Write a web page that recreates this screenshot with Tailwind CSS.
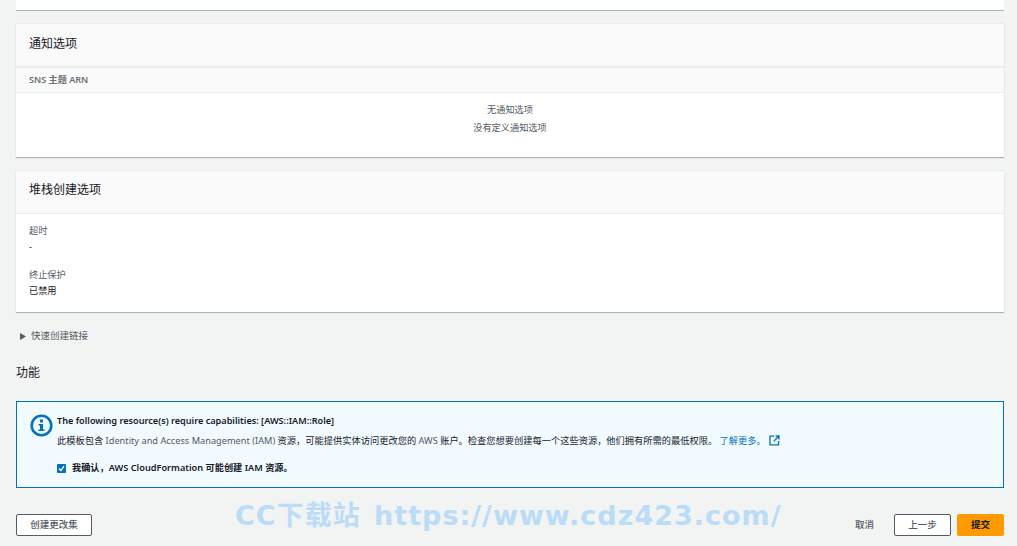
<!DOCTYPE html>
<html lang="zh-CN">
<head>
  <meta charset="UTF-8" />
  <title>快速创建堆栈</title>
  <script src="https://cdn.jsdelivr.net/npm/@tailwindcss/browser@4"></script>
</head>
<body class="relative h-[546px] w-[1017px] overflow-hidden bg-[#f2f3f3] font-['Noto_Sans','Noto_Sans_CJK_SC',sans-serif] text-[#16191f]">

<main class="flex h-[546px] flex-col pl-[16px] pr-[13px]">
  <!-- previous card, cut off by the top of the window -->
  <div class="h-[11px] shrink-0 border-b border-[#aab7b8] bg-white"></div>

  <!-- Notifications -->
  <section class="mt-[13px] h-[134px] shrink-0 border-b border-[#aab7b8] bg-white shadow-[0_0_1px_rgba(0,0,0,0.2)]">
    <div class="flex h-[44px] items-center border-b-2 border-[#eaeded] bg-[#fafafa] pb-[3px] pl-[13px] text-[12px] leading-none">通知选项</div>
    <div class="flex h-[25px] items-center border-b border-[#eaeded] bg-[#fafafa] pb-[1px] pl-[13px] text-[9.1px] font-semibold text-[#687078]">SNS 主题 ARN</div>
    <div class="flex flex-col items-center pt-[8px] text-[9.2px] leading-[18px] text-[#545b64]">
      <p>无通知选项</p>
      <p>没有定义通知选项</p>
    </div>
  </section>

  <!-- Stack creation options -->
  <section class="mt-[13px] h-[142px] shrink-0 border-b border-[#aab7b8] bg-white shadow-[0_0_1px_rgba(0,0,0,0.2)]">
    <div class="flex h-[43px] items-center border-b border-[#eaeded] bg-[#fafafa] pb-[5px] pl-[13px] text-[12px] leading-none">堆栈创建选项</div>
    <div class="pl-[13px] pt-[9px] text-[9.2px] leading-[16px]">
      <p class="text-[#545b64]">超时</p>
      <p>-</p>
      <p class="mt-[12px] text-[#545b64]">终止保护</p>
      <p>已禁用</p>
    </div>
  </section>

  <!-- Quick create link -->
  <div class="mt-[17px] flex h-[12px] shrink-0 items-center gap-[5px] pl-[4px] text-[9.5px] text-[#545b64]">
    <svg class="h-[7px] w-[6px]" viewBox="0 0 6 7"><path d="M0 0l6 3.5L0 7z" fill="#545b64"/></svg>
    <span>快速创建链接</span>
  </div>

  <h2 class="mt-[24px] h-[14px] shrink-0 text-[12px] leading-[14px] text-[#16191f]">功能</h2>

  <!-- Capabilities alert -->
  <div class="mt-[21px] flex h-[87px] shrink-0 border border-[#0073bb] bg-[#f1faff] pl-[13px] pt-[12px]">
    <svg class="h-[23px] w-[23px] shrink-0" viewBox="0 0 23 23">
      <circle cx="11.5" cy="11.5" r="9.8" fill="none" stroke="#0073bb" stroke-width="2.6"/>
      <rect x="10" y="5.5" width="3" height="3" fill="#0073bb"/>
      <path d="M8.5 10h4.5v5.5h1.5V17h-6v-1.5H10V11.5H8.5z" fill="#0073bb"/>
    </svg>
    <div class="ml-[4px] min-w-0">
      <p class="text-[9.15px] font-semibold leading-[14px]">The following resource(s) require capabilities: [AWS::IAM::Role]</p>
      <p class="mt-[6px] whitespace-nowrap text-[9.24px] leading-[14px]">此模板包含 <span class="text-[#545b64]">Identity and Access Management (IAM)</span> 资源，可能提供实体访问更改您的 <span class="text-[#545b64]">AWS</span> 账户。检查您想要创建每一个这些资源，他们拥有所需的最低权限。 <a class="text-[#0073bb]">了解更多。</a><svg class="ml-[3px] inline h-[11px] w-[11px] align-[-2px]" viewBox="0 0 11 11" fill="none" stroke="#0073bb" stroke-width="1.3"><path d="M5 1.2H1v8.6h8.6V6M6.5 1h3.5v3.5M10 1L4.8 6.2"/></svg></p>
      <label class="mt-[13px] flex items-center gap-[6px] text-[9.2px] font-semibold leading-[14px]">
        <span class="flex h-[9px] w-[9px] items-center justify-center rounded-[1px] bg-[#0073bb]">
          <svg class="h-[7px] w-[7px]" viewBox="0 0 7 7" fill="none" stroke="#fff" stroke-width="1.3"><path d="M1 3.5l2 2L6 1.2"/></svg>
        </span>
        <span>我确认，AWS CloudFormation 可能创建 IAM 资源。</span>
      </label>
    </div>
  </div>

  <!-- Actions -->
  <div class="mt-[26px] flex h-[22px] shrink-0 items-stretch text-[9.5px]">
    <button class="w-[76px] rounded-[2px] border border-[#545b64] bg-white font-medium text-[#545b64]">创建更改集</button>
    <button class="ml-auto mr-[20px] font-medium text-[#545b64]">取消</button>
    <button class="w-[57px] rounded-[2px] border border-[#545b64] bg-white font-medium text-[#545b64]">上一步</button>
    <button class="ml-[6px] w-[47px] rounded-[2px] bg-[#ff9900] font-semibold text-[#16191f]">提交</button>
  </div>
</main>

<!-- watermark over the page -->
<div class="absolute left-[235px] top-[499px] whitespace-nowrap font-['DejaVu_Sans','Noto_Sans_CJK_SC',sans-serif] text-[27px] font-bold leading-[34px] tracking-[1px] text-[#bbdcf7] [word-spacing:3px]">CC下载站 https://www.cdz423.com/</div>

</body>
</html>
